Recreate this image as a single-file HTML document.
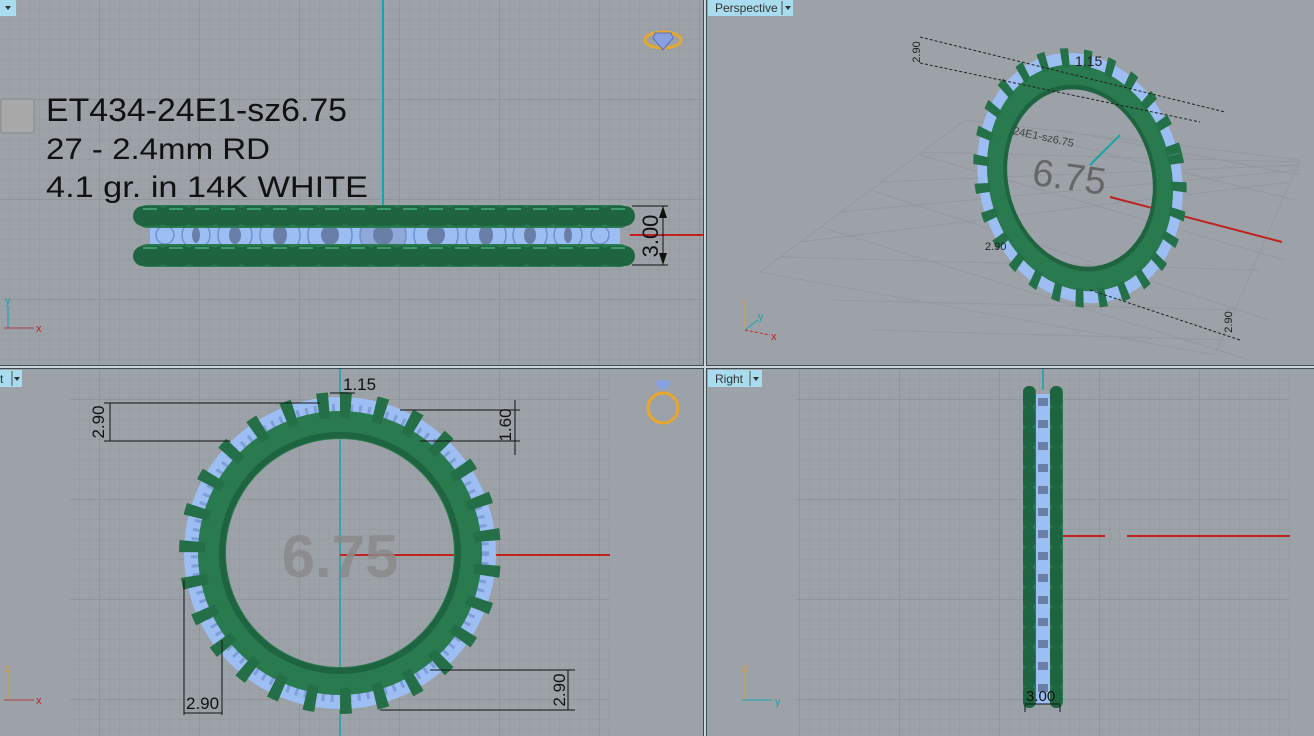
<!DOCTYPE html>
<html><head><meta charset="utf-8"><style>
html,body{margin:0;padding:0;background:#9ca2a7;overflow:hidden}
svg{display:block}
text{font-family:"Liberation Sans",sans-serif}
</style></head><body>
<svg width="1314" height="736" viewBox="0 0 1314 736" xmlns="http://www.w3.org/2000/svg">
<defs>
<pattern id="g" width="10" height="10" patternUnits="userSpaceOnUse">
<path d="M10 0V10M0 10H10" stroke="#92989e" stroke-width="1" fill="none"/>
</pattern>
<pattern id="G" width="100" height="100" patternUnits="userSpaceOnUse">
<rect width="100" height="100" fill="url(#g)"/>
<path d="M100 0V100M0 100H100" stroke="#848a90" stroke-width="1" fill="none"/>
</pattern>
</defs>
<rect width="1314" height="736" fill="#9ca2a7"/>
<rect x="0" y="0" width="703" height="365" fill="url(#G)"/>
<rect x="70" y="370" width="540" height="366" fill="url(#G)"/>
<rect x="795" y="370" width="495" height="366" fill="url(#G)"/>
<g opacity="0.5" stroke="#8a9096" fill="none">
<polygon points="760,272 965,120 1300,160 1215,355"/>
<path d="M800,242 L1290,182 M840,212 L1300,170 M880,182 L1300,165 M920,152 L1300,162 M780,257 L1260,270 M830,300 L1240,310 M870,330 L1230,340"/>
<path d="M820,227 L1250,360 M870,190 L1270,320 M920,155 L1285,260 M990,125 L1295,200 M1060,130 L1300,175"/>
</g>
<rect x="703" y="0" width="4" height="736" fill="#3c4c55"/>
<rect x="0" y="365" width="1314" height="4" fill="#3c4c55"/>
<rect x="704" y="0" width="2" height="736" fill="#cfd6da"/>
<rect x="0" y="366" width="1314" height="2" fill="#cfd6da"/>

<!-- TOP-LEFT -->
<rect x="0" y="0" width="16" height="16" fill="#a8dcee"/>
<path d="M5 6L11 6L8 10Z" fill="#333"/>
<line x1="383" y1="0" x2="383" y2="207" stroke="#1aa3a8" stroke-width="2"/>
<line x1="630" y1="235" x2="703" y2="235" stroke="#c02020" stroke-width="2"/>
<rect x="1" y="99" width="33" height="34" rx="2" fill="#a8a8a8" stroke="#8a8a8a"/>
<text x="46" y="121" font-size="32" fill="#111" textLength="301" lengthAdjust="spacingAndGlyphs">ET434-24E1-sz6.75</text>
<text x="46" y="159" font-size="30" fill="#111" textLength="224" lengthAdjust="spacingAndGlyphs">27 - 2.4mm RD</text>
<text x="46" y="197" font-size="30" fill="#111" textLength="322" lengthAdjust="spacingAndGlyphs">4.1 gr.  in 14K WHITE</text>
<rect x="150" y="218" width="470" height="34" fill="#9cbef2"/>
<g fill="none" stroke="#7090d0" stroke-width="1.5">
<circle cx="383" cy="235" r="23" fill="#8fa8d8"/><circle cx="330" cy="235" r="22"/><circle cx="436" cy="235" r="22"/>
<circle cx="280" cy="235" r="20"/><circle cx="486" cy="235" r="20"/><circle cx="235" cy="235" r="17"/><circle cx="530" cy="235" r="17"/>
<circle cx="196" cy="235" r="14"/><circle cx="568" cy="235" r="14"/><circle cx="165" cy="235" r="9"/><circle cx="600" cy="235" r="9"/>
</g>
<g fill="#6a7fa8"><ellipse cx="383" cy="235" rx="10" ry="10"/><ellipse cx="330" cy="235" rx="9" ry="10"/><ellipse cx="436" cy="235" rx="9" ry="10"/><ellipse cx="280" cy="235" rx="7" ry="10"/><ellipse cx="486" cy="235" rx="7" ry="10"/><ellipse cx="235" cy="235" rx="6" ry="9"/><ellipse cx="530" cy="235" rx="6" ry="9"/><ellipse cx="196" cy="235" rx="4" ry="8"/><ellipse cx="568" cy="235" rx="4" ry="8"/></g>
<rect x="137" y="205" width="493" height="23" rx="10" fill="#2a7a50"/>
<rect x="137" y="244" width="493" height="23" rx="10" fill="#2a7a50"/>
<line x1="143" y1="216" x2="628" y2="216" stroke="#1f6441" stroke-width="20" stroke-dasharray="14 12" stroke-linecap="round"/>
<line x1="143" y1="256" x2="628" y2="256" stroke="#1f6441" stroke-width="20" stroke-dasharray="14 12" stroke-linecap="round"/>
<line x1="143" y1="209" x2="628" y2="209" stroke="#3d9a6a" stroke-width="2" stroke-dasharray="14 12"/>
<line x1="143" y1="248" x2="628" y2="248" stroke="#3d9a6a" stroke-width="2" stroke-dasharray="14 12"/>
<g stroke="#111" stroke-width="1">
<line x1="632" y1="206" x2="668" y2="206"/><line x1="632" y1="265" x2="668" y2="265"/><line x1="663" y1="206" x2="663" y2="265"/>
</g>
<path d="M663 206l-4 12h8zM663 265l-4 -12h8z" fill="#111"/>
<text transform="translate(658,236) rotate(-90)" text-anchor="middle" font-size="22" fill="#111">3.00</text>
<line x1="8" y1="306" x2="8" y2="328" stroke="#1aa3a8"/><line x1="4" y1="328" x2="34" y2="328" stroke="#b04040"/>
<text x="5" y="304" font-size="11" fill="#20a0b0">y</text><text x="36" y="332" font-size="11" fill="#c02020">x</text>
<g transform="translate(663,40)"><ellipse rx="18" ry="8" fill="none" stroke="#e8a830" stroke-width="3"/><path d="M-8 -7L8 -7L10 -2L0 10L-10 -2Z" fill="#88a0e0" stroke="#5a70c0"/></g>

<!-- TOP-RIGHT -->
<rect x="708" y="0" width="85" height="16" fill="#a8dcee"/>
<text x="715" y="12" font-size="12" fill="#333">Perspective</text>
<line x1="782" y1="1" x2="782" y2="15" stroke="#555"/><path d="M785 6L791 6L788 10Z" fill="#333"/>
<line x1="1110" y1="197" x2="1282" y2="242" stroke="#c02020" stroke-width="2"/>
<g transform="translate(1080,178) rotate(-14) scale(0.64,0.8)">
<circle r="148" fill="none" stroke="#9cbef2" stroke-width="20"/>
<circle r="128" fill="none" stroke="#2a7a50" stroke-width="30"/>
<circle r="115" fill="none" stroke="#1f6441" stroke-width="6"/>
<circle r="152" fill="none" stroke="#247048" stroke-width="24" stroke-dasharray="12 22.9"/>
</g>
<line x1="1090" y1="165" x2="1120" y2="135" stroke="#1aa3a8" stroke-width="2"/>
<text x="1032" y="190" font-size="38" fill="#666" transform="rotate(8 1070 180)">6.75</text>
<text x="1012" y="140" font-size="11" fill="#444" transform="rotate(12 1040 140)">24E1-sz6.75</text>
<g stroke="#222" stroke-dasharray="3 2" fill="none">
<line x1="920" y1="37" x2="1225" y2="112"/><line x1="920" y1="63" x2="1200" y2="122"/><line x1="1090" y1="290" x2="1240" y2="340"/>
</g>
<text transform="translate(920,52) rotate(-90)" text-anchor="middle" font-size="11" fill="#222">2.90</text>
<text x="1075" y="66" font-size="14" fill="#222">1.15</text>
<text transform="translate(1232,322) rotate(-90)" text-anchor="middle" font-size="11" fill="#222">2.90</text>
<text x="985" y="250" font-size="11" fill="#222">2.90</text>
<line x1="745" y1="300" x2="745" y2="330" stroke="#d4a040"/><line x1="745" y1="330" x2="770" y2="335" stroke="#c02020" stroke-dasharray="3 2"/><line x1="745" y1="330" x2="758" y2="320" stroke="#1aa3a8"/>
<text x="758" y="320" font-size="11" fill="#20a0b0">y</text><text x="771" y="340" font-size="11" fill="#c02020">x</text>

<!-- BOTTOM-LEFT -->
<rect x="0" y="370" width="22" height="17" fill="#a8dcee"/>
<text x="0" y="383" font-size="12" fill="#333">t</text>
<line x1="12" y1="371" x2="12" y2="386" stroke="#555"/><path d="M14 377L20 377L17 381Z" fill="#333"/>
<line x1="340" y1="369" x2="340" y2="736" stroke="#1aa3a8" stroke-width="1.5"/>
<line x1="340" y1="555" x2="610" y2="555" stroke="#c02020" stroke-width="2"/>
<circle cx="340" cy="553" r="145" fill="none" stroke="#9cbef2" stroke-width="22"/>
<circle cx="340" cy="553" r="145" fill="none" stroke="#6a88c8" stroke-width="8" stroke-dasharray="3 6" opacity="0.6"/>
<circle cx="340" cy="553" r="128" fill="none" stroke="#2a7a50" stroke-width="28"/>
<circle cx="340" cy="553" r="118" fill="none" stroke="#1f6441" stroke-width="6"/>
<circle cx="340" cy="553" r="148" fill="none" stroke="#256f48" stroke-width="26" stroke-dasharray="11 23.9" transform="rotate(-90 340 553)"/>
<text x="340" y="577" text-anchor="middle" font-size="60" font-weight="bold" fill="#8a8a8a" fill-opacity="0.85">6.75</text>
<g stroke="#111" stroke-width="1" fill="none">
<line x1="104" y1="403" x2="320" y2="403"/><line x1="104" y1="441" x2="230" y2="441"/><line x1="110" y1="403" x2="110" y2="441"/>
<line x1="400" y1="410" x2="520" y2="410"/><line x1="420" y1="441" x2="520" y2="441"/><line x1="515" y1="400" x2="515" y2="455"/>
<line x1="184" y1="580" x2="184" y2="715"/><line x1="222" y1="640" x2="222" y2="715"/><line x1="184" y1="713" x2="222" y2="713"/>
<line x1="430" y1="670" x2="575" y2="670"/><line x1="380" y1="710" x2="575" y2="710"/><line x1="568" y1="670" x2="568" y2="710"/>
<line x1="330" y1="393" x2="355" y2="393"/>
</g>
<text transform="translate(104,422) rotate(-90)" text-anchor="middle" font-size="17" fill="#111">2.90</text>
<text transform="translate(511,425) rotate(-90)" text-anchor="middle" font-size="17" fill="#111">1.60</text>
<text x="343" y="390" font-size="17" fill="#111">1.15</text>
<text x="186" y="709" font-size="17" fill="#111">2.90</text>
<text transform="translate(565,690) rotate(-90)" text-anchor="middle" font-size="17" fill="#111">2.90</text>
<line x1="8" y1="670" x2="8" y2="700" stroke="#d4a040"/><line x1="4" y1="700" x2="34" y2="700" stroke="#b04040"/>
<text x="5" y="672" font-size="11" fill="#d4a040">z</text><text x="36" y="704" font-size="11" fill="#c02020">x</text>
<g transform="translate(663,408)"><circle r="15" fill="none" stroke="#e8a830" stroke-width="3"/><path d="M-6 -28L6 -28L8 -24L0 -17L-8 -24Z" fill="#88a0e0"/></g>

<!-- BOTTOM-RIGHT -->
<rect x="708" y="370" width="54" height="17" fill="#a8dcee"/>
<text x="715" y="383" font-size="12" fill="#333">Right</text>
<line x1="750" y1="371" x2="750" y2="386" stroke="#555"/><path d="M753 377L759 377L756 381Z" fill="#333"/>
<line x1="1043" y1="369" x2="1043" y2="390" stroke="#1aa3a8" stroke-width="1.5"/>
<line x1="1062" y1="536" x2="1105" y2="536" stroke="#c02020" stroke-width="2"/>
<line x1="1127" y1="536" x2="1290" y2="536" stroke="#c02020" stroke-width="2"/>
<rect x="1030" y="394" width="26" height="310" fill="#9cbef2"/>
<line x1="1043" y1="398" x2="1043" y2="700" stroke="#6a7fa8" stroke-width="10" stroke-dasharray="8 14"/>
<rect x="1023" y="386" width="13" height="322" rx="6" fill="#2a7a50"/>
<rect x="1050" y="386" width="13" height="322" rx="6" fill="#2a7a50"/>
<line x1="1029" y1="392" x2="1029" y2="704" stroke="#1f6441" stroke-width="12" stroke-dasharray="10 10" stroke-linecap="round"/>
<line x1="1056" y1="392" x2="1056" y2="704" stroke="#1f6441" stroke-width="12" stroke-dasharray="10 10" stroke-linecap="round"/>
<g stroke="#111" fill="none"><line x1="1025" y1="705" x2="1025" y2="712"/><line x1="1060" y1="705" x2="1060" y2="712"/><line x1="1025" y1="704" x2="1060" y2="704"/></g>
<text x="1026" y="701" font-size="15" fill="#111">3.00</text>
<line x1="745" y1="668" x2="745" y2="700" stroke="#d4a040"/><line x1="742" y1="700" x2="772" y2="700" stroke="#1aa3a8"/>
<text x="742" y="672" font-size="11" fill="#d4a040">z</text><text x="775" y="705" font-size="11" fill="#20a0b0">y</text>
</svg>
</body></html>
